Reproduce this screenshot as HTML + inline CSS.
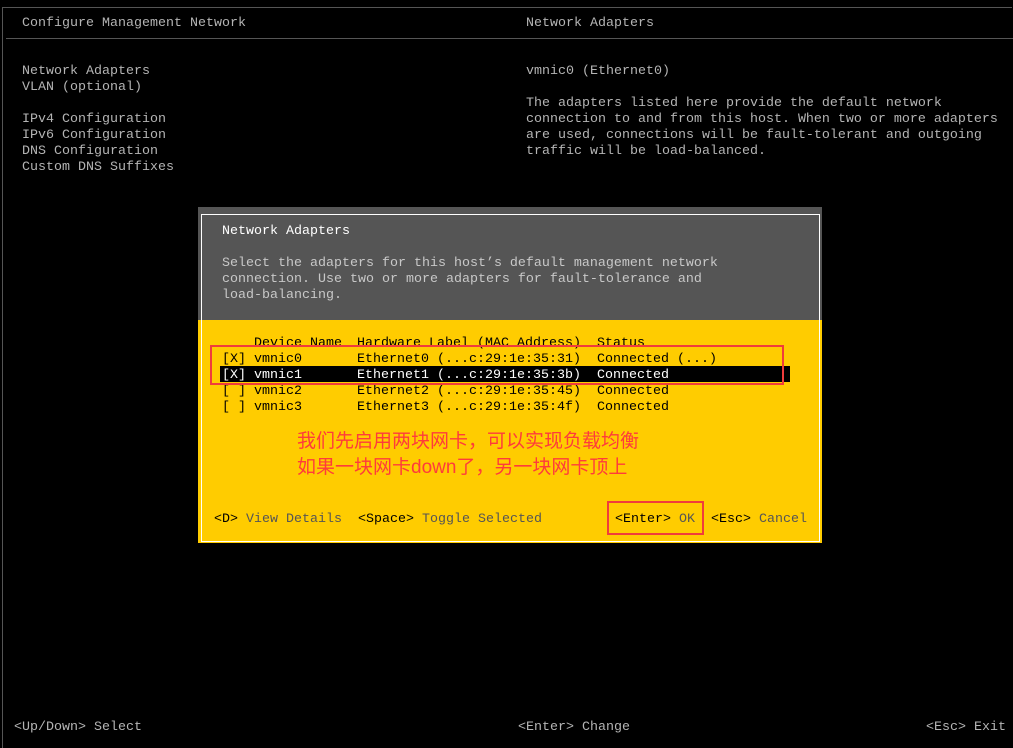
<!DOCTYPE html>
<html><head><meta charset="utf-8"><style>
body{margin:0;width:1013px;height:740px;background:#000;overflow:hidden;position:relative;font-family:"Liberation Mono",monospace;font-size:13.33px;color:#b4b4b4}
.t{position:absolute;line-height:16px;white-space:pre;margin-top:2px}
.b{position:absolute}
.k{color:#000}.g{color:#555}
.cn{position:absolute;font-family:"Liberation Sans","Noto Sans CJK SC",sans-serif;font-size:19px;color:#ff3b3b;line-height:26px;white-space:pre}
</style></head><body>
<div class="b" style="left:2px;top:7px;width:1009px;height:740px;border-left:1px solid #555;border-top:1px solid #555"></div>
<div class="b" style="left:6px;top:38px;width:1007px;height:1px;background:#555"></div>
<div class="t" style="left:22px;top:14px">Configure Management Network</div>
<div class="t" style="left:526px;top:14px">Network Adapters</div>
<div class="t" style="left:22px;top:62px">Network Adapters
VLAN (optional)

IPv4 Configuration
IPv6 Configuration
DNS Configuration
Custom DNS Suffixes</div>
<div class="t" style="left:526px;top:62px">vmnic0 (Ethernet0)

The adapters listed here provide the default network
connection to and from this host. When two or more adapters
are used, connections will be fault-tolerant and outgoing
traffic will be load-balanced.</div>
<div class="t" style="left:14px;top:718px">&lt;Up/Down&gt; Select</div>
<div class="t" style="left:518px;top:718px">&lt;Enter&gt; Change</div>
<div class="t" style="left:926px;top:718px">&lt;Esc&gt; Exit</div>

<div class="b" style="left:198px;top:207px;width:624px;height:113px;background:#555"></div>
<div class="b" style="left:198px;top:320px;width:624px;height:223px;background:#fc0"></div>
<div class="b" style="left:201px;top:214px;width:617px;height:326px;border:1px solid #fff"></div>
<div class="t" style="left:222px;top:222px;color:#fff">Network Adapters</div>
<div class="t" style="left:222px;top:254px;color:#c8c8c8">Select the adapters for this host’s default management network
connection. Use two or more adapters for fault-tolerance and
load-balancing.</div>
<div class="b" style="left:220px;top:366px;width:570px;height:16px;background:#000"></div>
<div class="t k" style="left:254px;top:334px">Device Name</div>
<div class="t k" style="left:357px;top:334px">Hardware Label (MAC Address)</div>
<div class="t k" style="left:597px;top:334px">Status</div>
<div class="t k" style="left:222px;top:350px">[X] vmnic0
<span style="color:#fff">[X] vmnic1</span>
[ ] vmnic2
[ ] vmnic3</div>
<div class="t k" style="left:357px;top:350px">Ethernet0 (...c:29:1e:35:31)
<span style="color:#fff">Ethernet1 (...c:29:1e:35:3b)</span>
Ethernet2 (...c:29:1e:35:45)
Ethernet3 (...c:29:1e:35:4f)</div>
<div class="t k" style="left:597px;top:350px">Connected (...)
<span style="color:#fff">Connected</span>
Connected
Connected</div>
<div class="b" style="left:210px;top:345px;width:570px;height:36px;border:2px solid #f03c3c"></div>
<div class="cn" style="left:297px;top:429px">我们先启用两块网卡，可以实现负载均衡
如果一块网卡down了，另一块网卡顶上</div>
<div class="t" style="left:214px;top:510px"><span class="k">&lt;D&gt;</span><span class="g"> View Details  </span><span class="k">&lt;Space&gt;</span><span class="g"> Toggle Selected</span></div>
<div class="t" style="left:615px;top:510px"><span class="k">&lt;Enter&gt;</span><span class="g"> OK  </span><span class="k">&lt;Esc&gt;</span><span class="g"> Cancel</span></div>
<div class="b" style="left:607px;top:501px;width:93px;height:30px;border:2px solid #f03c3c"></div>
</body></html>
